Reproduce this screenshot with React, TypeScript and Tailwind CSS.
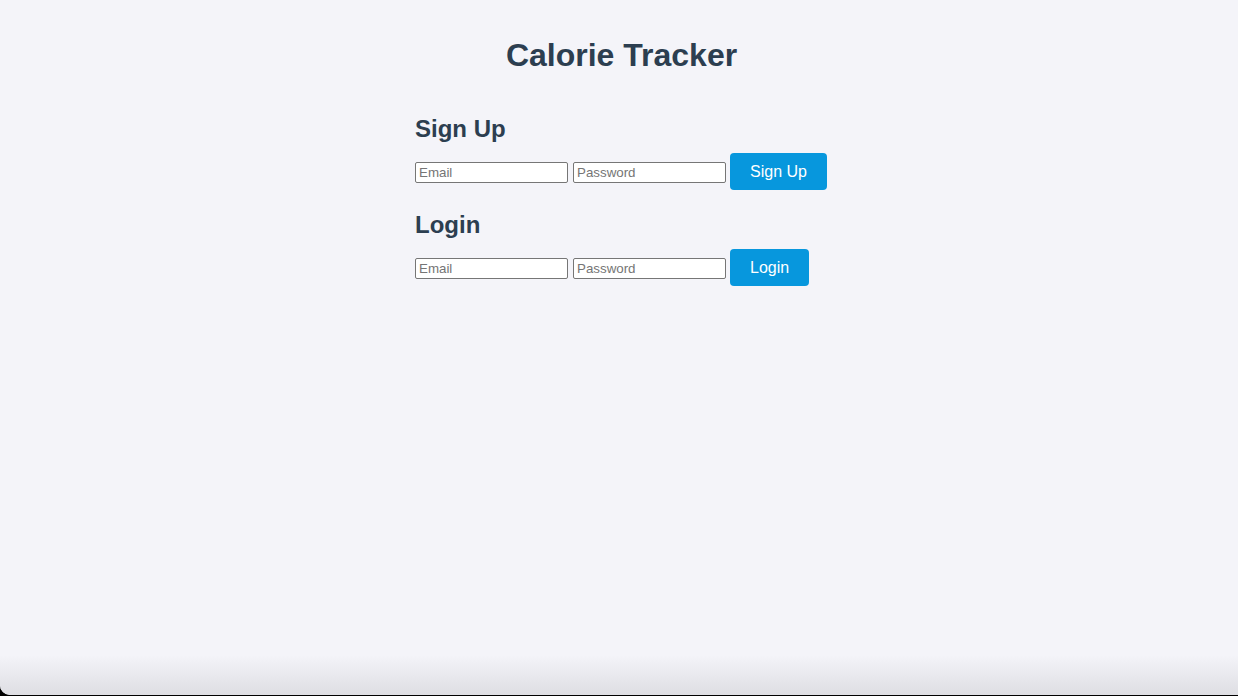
import React from "react";

function Row({ label }: { label: string }) {
  return (
    <div className="flex items-center mt-[10px]">
      <input
        type="email"
        placeholder="Email"
        className="mt-[2px] shrink-0 w-[153px] h-[21px] border border-[#767676] rounded-[2px] bg-white px-[3px] text-[13.33px] text-black placeholder:text-[#757575] outline-none"
      />
      <input
        type="password"
        placeholder="Password"
        className="mt-[2px] shrink-0 ml-[5px] w-[153px] h-[21px] border border-[#767676] rounded-[2px] bg-white px-[3px] text-[13.33px] text-black placeholder:text-[#757575] outline-none"
      />
      <button className="shrink-0 whitespace-nowrap ml-[4px] h-[37px] px-[20px] rounded-[4px] bg-[#0797dd] text-white text-[16px] leading-[18px]">
        {label}
      </button>
    </div>
  );
}

export default function App() {
  return (
    <div className="w-[1238px] h-[696px] bg-black overflow-hidden" style={{ fontFamily: '"Liberation Sans", Arial, sans-serif' }}>
      <div className="h-[695px] bg-[#f4f4f9] rounded-bl-[10px] overflow-hidden flex flex-col">
        <div className="flex-1">
          <h1 className="mt-[37px] pl-[5px] text-center text-[32px] leading-[37px] font-bold text-[#2c3e50]">Calorie Tracker</h1>
          <div className="w-[408px] mx-auto mt-[41px]">
            <h2 className="text-[24px] leading-[28px] font-bold text-[#2c3e50]">Sign Up</h2>
            <Row label="Sign Up" />
            <h2 className="mt-[21px] text-[24px] leading-[28px] font-bold text-[#2c3e50]">Login</h2>
            <Row label="Login" />
          </div>
        </div>
        <div className="h-[40px] bg-gradient-to-b from-[#f4f4f9] to-[#dedee3]" />
      </div>
    </div>
  );
}
